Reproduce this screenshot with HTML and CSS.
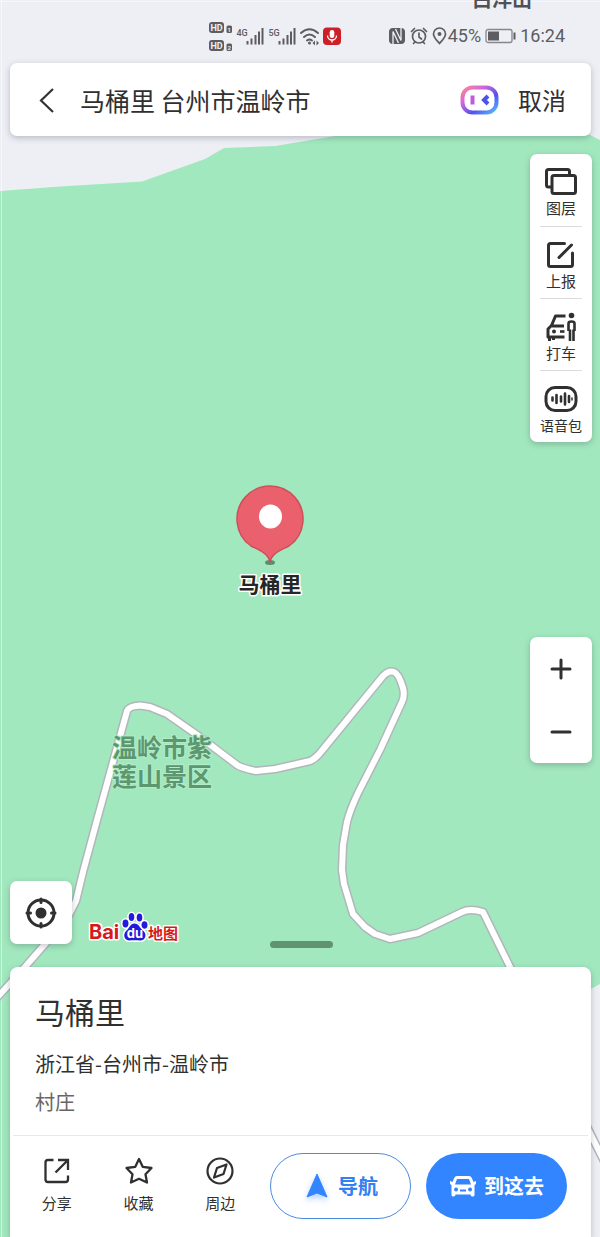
FILE: index.html
```html
<!DOCTYPE html>
<html lang="zh-CN">
<head>
<meta charset="utf-8">
<meta name="viewport" content="width=device-width, initial-scale=1">
<title>马桶里</title>
<link rel="stylesheet" href="styles.css">
</head>
<body>
<main class="screen">
  <svg class="map" viewBox="0 0 600 1237" preserveAspectRatio="xMidYMin slice" role="img" aria-label="地图">
    <rect class="map-land" width="600" height="1237"/>
    <path class="map-park" d="M0 191L60 186.500 142 181.500 205 159 224 148 275 146 335 136 400 128H560L590 135 600 140V984L560 1006 300 1237H0Z"/>
    <path class="map-tile" d="M0 1.500H600M1.500 0V1237"/>
    <g class="road">
      <path id="road" class="road-edge" d="M-6 1001L25 967 45 944 69 915 76 901 83 872 97 820 127 711Q129 706 140 705.500L150 707 167 714 200 737 237 765 Q241 768 256 771L275 769 310 761Q315 759 320 753L383 676Q389 670 394 672T403 688Q405 696 402 702L380 750 358 793Q350 810 347 822L343 845 342 870 344 884 353 914 365 927 375 934 390 939 418 933 462 912Q470 908 483 912L510 967 591 1135 606 1165"/>
      <use href="#road" class="road-fill"/>
    </g>
    <text class="map-town" x="502" y="7">白洋山</text>
    <text class="map-area"><tspan x="162" y="757">温岭市紫</tspan><tspan x="162" y="786">莲山景区</tspan></text>
    <ellipse class="pin-shadow" cx="270" cy="562.500" rx="5" ry="2.500"/>
    <path class="pin" d="M270 562C268 553 259 550 251 546A33 33 0 1 1 289 546C281 550 272 553 270 562Z"/>
    <ellipse cx="270.500" cy="516.500" rx="11.500" ry="12" fill="#fff"/>
    <text class="pin-label" x="270" y="592">马桶里</text>
  </svg>

  <header class="status">
    <svg class="status-signal" viewBox="0 0 136 34" aria-hidden="true">
      <g fill="#5c5d60">
        <rect x="1" y="3" width="15" height="11" rx="3"/><rect x="1" y="21" width="15" height="11" rx="3"/>
        <rect x="18.500" y="6.500" width="5.500" height="7.500" rx="1.500"/><rect x="18.500" y="24.500" width="5.500" height="7.500" rx="1.500"/>
        <g class="hd"><text x="8.500" y="12">HD</text><text x="8.500" y="30">HD</text></g>
        <g class="sim"><text x="21.300" y="12.700">1</text><text x="21.300" y="30.700">2</text></g>
        <g class="gen"><text x="34" y="17">4G</text><text x="66" y="17">5G</text></g>
        <path id="bars" d="M38.500 22h2v3.500h-2zM42.500 19.500h2v6h-2zM46.500 16h2v9.500h-2zM50 12.500h2v13h-2zM53.500 9h2v16.500h-2z"/>
        <use href="#bars" x="32"/>
      </g>
      <g fill="none" stroke="#5c5d60" stroke-width="2" stroke-linecap="round">
        <path d="M93 14Q101.500 6.500 110 14M96 18Q101.500 13 107 18M99 21.500Q101.500 19.500 104 21.500"/>
      </g>
      <circle cx="101.500" cy="24" r="1.500" fill="#5c5d60"/>
      <path d="M107 21.500v5l-2.500-2.500zM108.500 21.500v5l2.500-2.500z" fill="#5c5d60"/>
      <rect x="115" y="8.500" width="18" height="17.500" rx="4" fill="#cb2027"/>
      <rect x="121.700" y="11" width="4.600" height="8" rx="2.300" fill="#fff"/>
      <path d="M119.500 16.500a4.500 4.500 0 0 0 9 0M124 21v2.500" fill="none" stroke="#fff" stroke-width="1.300"/>
    </svg>
    <div class="status-right">
      <svg class="status-icons" viewBox="0 0 60 20" aria-hidden="true">
        <rect x="1" y="2" width="16" height="16" rx="4" fill="#5c5d60"/>
        <path d="M5 18V5.500L10.500 17M13 2V14.500L7.500 3" fill="none" stroke="#eeeff5" stroke-width="1.300"/>
        <g fill="none" stroke="#5c5d60" stroke-width="1.700" stroke-linecap="round">
          <circle cx="31" cy="10.500" r="6.500"/><path d="M31 7v4l2.500 2M23.500 5.500l3-3M38.500 5.500l-3-3M27 16l-1.500 1.500M35 16l1.500 1.500"/>
          <path d="M51.500 17.500C49 14.500 45.500 11.500 45.500 8a6 6 0 0 1 12 0C57.500 11.500 54 14.500 51.500 17.500Z"/>
        </g>
        <circle cx="51.500" cy="8" r="2" fill="#5c5d60"/>
      </svg>
      <span>45%</span>
      <svg class="status-battery" viewBox="0 0 32 16" aria-hidden="true">
        <rect x="1" y="1.500" width="26" height="13" rx="2" fill="none" stroke="#85868a" stroke-width="1.300"/>
        <rect x="3" y="3.500" width="11" height="9" fill="#5c5d60"/><path d="M29.500 4.500v7" stroke="#5c5d60" stroke-width="2"/>
      </svg>
      <time>16:24</time>
    </div>
  </header>

  <form class="search card">
    <button class="icon-button back" type="button" aria-label="返回">
      <svg viewBox="0 0 24 28"><path d="M17 3L5 14.500 17 26" fill="none" stroke="#333" stroke-width="2.200"/></svg>
    </button>
    <input class="search-input" type="text" aria-label="搜索地点" value="马桶里 台州市温岭市">
    <button class="icon-button assistant" type="button" aria-label="语音助手">
      <svg viewBox="0 0 40 32">
        <defs><linearGradient id="glow" x1="0" y1="0" x2="1" y2="1"><stop offset="0" stop-color="#ff8791"/><stop offset=".3" stop-color="#cf68dc"/><stop offset=".65" stop-color="#5552ec"/><stop offset="1" stop-color="#55bdff"/></linearGradient></defs>
        <rect x="2.500" y="3.500" width="34" height="25" rx="10" fill="none" stroke="url(#glow)" stroke-width="4"/>
        <path d="M12.500 11.500v9" stroke="#bd5ed8" stroke-width="4"/><path d="M28 12L24 16 28 20" fill="none" stroke="#4b54e8" stroke-width="4"/>
      </svg>
    </button>
    <button class="cancel" type="button">取消</button>
  </form>

  <section class="controls">
    <nav class="tools card" aria-label="地图工具">
      <button class="tool" type="button">
        <svg viewBox="0 0 34 30"><g fill="#fff" stroke="#303030" stroke-width="3"><rect x="2.500" y="2.500" width="23" height="17.500" rx="2"/><rect x="8" y="8.500" width="23.500" height="18" rx="2"/></g></svg>
        <span>图层</span>
      </button>
      <button class="tool" type="button">
        <svg viewBox="0 0 34 30"><path d="M20.500 3.500H6.500Q4.500 3.500 4.500 5.500V24.500Q4.500 26.500 6.500 26.500H26.500Q28.500 26.500 28.500 24.500V13M15 17.500L27.500 5" fill="none" stroke="#303030" stroke-width="3" stroke-linecap="round"/></svg>
        <span>上报</span>
      </button>
      <button class="tool" type="button">
        <svg viewBox="0 0 34 30"><g fill="none" stroke="#303030" stroke-width="3" stroke-linejoin="round"><path d="M21.500 4H11.500L7.500 13.500 4 17V25H20.500M8 14H20M5.500 25v4M9.500 25v3"/><path d="M24.500 19V11.500Q24.500 9.500 27.500 9.500T30.500 11.500V19M26 17.500V29M29.500 17.500V29" stroke-width="2.600"/></g><circle cx="27.500" cy="3.500" r="2.800" fill="#303030"/><circle cx="10" cy="19.500" r="2" fill="#303030"/><path d="M16 19.500H20.500" stroke="#303030" stroke-width="2.600"/></svg>
        <span>打车</span>
      </button>
      <button class="tool" type="button">
        <svg viewBox="0 0 34 30"><rect x="2" y="3.500" width="30" height="23" rx="9" fill="none" stroke="#303030" stroke-width="3"/><path d="M8.500 13.500v3M12.500 11v8M17 12.500v5M21 9.500v11M25 12v6" stroke="#303030" stroke-width="2.600" stroke-linecap="round"/><path d="M28 14v2" stroke="#303030" stroke-width="1.500" stroke-linecap="round"/></svg>
        <span class="tool-long">语音包</span>
      </button>
    </nav>

    <div class="zoom card">
      <button class="zoom-button" type="button" aria-label="放大"><svg viewBox="0 0 22 22"><path d="M2 11H20M11 2V20" stroke="#303030" stroke-width="3" stroke-linecap="round"/></svg></button>
      <button class="zoom-button" type="button" aria-label="缩小"><svg viewBox="0 0 22 22"><path d="M2 11H20" stroke="#303030" stroke-width="3" stroke-linecap="round"/></svg></button>
    </div>

    <div class="map-foot">
      <div class="map-foot-left">
        <button class="locate card" type="button" aria-label="定位">
          <svg viewBox="0 0 32 32"><circle cx="16" cy="16" r="13" fill="none" stroke="#303030" stroke-width="3"/><circle cx="16" cy="16" r="5.500" fill="#303030"/><path d="M16 2V5.500M16 26.500V30M2 16H5.500M26.500 16H30" stroke="#303030" stroke-width="3" stroke-linecap="round"/></svg>
        </button>
        <svg class="logo" viewBox="0 0 92 34" role="img" aria-label="百度地图">
          <g class="logo-halo">
            <text class="logo-latin" x="1" y="29">Bai</text>
            <text class="logo-cjk" x="60" y="28.500">地图</text>
            <g class="paw">
              <ellipse cx="37.500" cy="13.500" rx="3" ry="4"/><ellipse cx="43.500" cy="7" rx="2.800" ry="4"/><ellipse cx="51.500" cy="7.500" rx="2.800" ry="4"/><ellipse cx="56.500" cy="15" rx="3" ry="3.800"/>
              <path d="M46.500 13.500C51 13.500 51.500 18 55 20.500C59.500 24 57.500 30.500 52.500 30.500C49 30.500 45 30 42 30.500C36.500 31 34.500 25 38 21C41.500 18.500 42 13.500 46.500 13.500Z"/>
            </g>
          </g>
          <text class="logo-du" x="47" y="28">du</text>
        </svg>
      </div>
      <div class="handle"></div>
    </div>
  </section>

  <article class="sheet card">
    <div class="place">
      <h1>马桶里</h1>
      <p class="address">浙江省-台州市-温岭市</p>
      <p class="kind">村庄</p>
    </div>
    <div class="actions">
      <button class="action" type="button">
        <svg viewBox="0 0 30 30"><path d="M11.500 4H6Q3.500 4 3.500 6.500V23.500Q3.500 26 6 26H23.500Q26 26 26 23.500V19.500M16 4H26V14M26 4L13.500 16.500" fill="none" stroke="#303030" stroke-width="2.300"/></svg>
        <span>分享</span>
      </button>
      <button class="action" type="button">
        <svg viewBox="0 0 30 30"><path d="M15 3L18.700 10.800 27.500 12 21.500 18.200 23 26.500 15 22.800 7 26.500 8.500 18.200 2.500 12 11.300 10.800Z" fill="none" stroke="#303030" stroke-width="2.300" stroke-linejoin="round"/></svg>
        <span>收藏</span>
      </button>
      <button class="action" type="button">
        <svg viewBox="0 0 30 30"><g fill="none" stroke="#303030" stroke-width="2.200" stroke-linejoin="round"><circle cx="15" cy="15" r="12.500"/><path d="M21.500 8.500L18.500 18 9 21.500 12 12Z"/></g></svg>
        <span>周边</span>
      </button>
      <button class="pill pill-outline" type="button">
        <svg viewBox="0 0 28 28"><path d="M14 2L24 25 14 21 4 25Z" fill="#3385ff" stroke="#3385ff" stroke-linejoin="round"/></svg>
        <span>导航</span>
      </button>
      <button class="pill pill-solid" type="button">
        <svg viewBox="0 0 28 28"><path fill="#fff" fill-rule="evenodd" d="M8 4H20Q22 4 22.800 6L24.500 10 27 9V12L25.500 13V23Q25.500 24.500 23.500 24.500T21.500 22.500H6.500Q6.500 24.500 4.500 24.500T2.500 23V13L1 12V9L3.500 10 5.200 6Q6 4 8 4ZM8 7L6 12.500H22L20 7ZM7 15.500a2 2 0 1 0 .1 0ZM21 15.500a2 2 0 1 0 .1 0ZM11 17.500v2h6v-2Z"/></svg>
        <span>到这去</span>
      </button>
    </div>
  </article>
</main>
</body>
</html>
```
FILE: styles.css
```css
* { box-sizing: border-box; }

body {
  margin: 0;
  font-family: "Noto Sans CJK SC", "Noto Sans", sans-serif;
  color: #303030;
  background: #eeeff5;
}

button {
  margin: 0;
  padding: 0;
  border: 0;
  background: none;
  color: inherit;
  font: inherit;
}

svg { display: block; flex: none; }

.screen {
  position: relative;
  display: flex;
  flex-direction: column;
  min-height: 100vh;
  overflow: hidden;
  isolation: isolate;
}

.card {
  background: #fff;
  border-radius: 7px;
  box-shadow: 0 2px 6px rgba(40, 50, 70, 0.28);
}

/* Map canvas */
.map {
  position: absolute;
  inset: 0;
  z-index: -1;
  width: 100%;
  height: 100%;
}
.map text { text-anchor: middle; paint-order: stroke; stroke-linejoin: round; font-weight: 700; }
.map-land { fill: #eeeff5; }
.map-park { fill: #a2e8be; }
.map-tile { fill: none; stroke: rgba(255, 255, 255, 0.5); }
.road { fill: none; stroke: #b1b6bb; stroke-width: 9; stroke-linejoin: round; }
.road-fill { stroke: #fff; stroke-width: 6; }
.map-town { font-size: 20px; fill: #505156; }
.map-area { font-size: 25px; fill: #5c976f; stroke: #b2edca; stroke-width: 2; }
.pin { fill: #ea616d; stroke: #cf4e59; stroke-width: 1.5; }
.pin-shadow { fill: #5f8b70; }
.pin-label { font-size: 21px; fill: #262626; stroke: #fff; stroke-width: 3; }

/* Status bar */
.status {
  display: flex;
  justify-content: space-between;
  align-items: center;
  height: 63px;
  padding: 8px 35px 0 208px;
  color: #5c5d60;
  font: 18px/20px Roboto, sans-serif;
}
.status-signal { width: 136px; height: 34px; }
.status-signal text { text-anchor: middle; font-family: Roboto, sans-serif; font-weight: 700; }
.hd text { font-size: 9px; fill: #eeeff5; }
.sim text { font-size: 6px; fill: #eeeff5; }
.gen text { font-size: 9px; font-weight: 500; }
.status-right { display: flex; align-items: center; }
.status-icons { width: 60px; height: 20px; }
.status-battery { width: 32px; height: 16px; margin: 0 3px 0 4px; }

/* Search bar */
.search {
  display: flex;
  align-items: center;
  height: 73px;
  margin: 0 9px 0 10px;
  padding: 0 25px 0 26px;
}
.back svg { width: 24px; height: 28px; }
.search-input {
  flex: 1;
  min-width: 0;
  margin-left: 20px;
  padding: 0;
  border: 0;
  outline: 0;
  background: none;
  color: #303030;
  font: 25px/36px "Noto Sans CJK SC", sans-serif;
}
.assistant { margin-right: 18px; }
.assistant svg { width: 40px; height: 32px; }
.cancel { font-size: 24px; line-height: 36px; }

/* Floating controls */
.controls {
  flex: 1;
  display: flex;
  flex-direction: column;
  align-items: flex-end;
  padding: 18px 8px 23px 10px;
}
.tools {
  display: flex;
  flex-direction: column;
  width: 62px;
  padding: 0 10px;
}
.tool {
  display: flex;
  flex-direction: column;
  align-items: center;
  height: 72px;
  padding-top: 13px;
  font-size: 15px;
  line-height: 22px;
  white-space: nowrap;
}
.tool + .tool { border-top: 1px solid #dcdcdc; }
.tool svg { width: 34px; height: 30px; }
.tool-long { font-size: 14px; }

.zoom {
  display: flex;
  flex-direction: column;
  width: 62px;
  margin-top: 195px;
}
.zoom-button { display: grid; place-items: center; height: 63px; }
.zoom-button svg { width: 22px; height: 22px; }

.map-foot {
  display: grid;
  grid-template-columns: 1fr auto 1fr;
  align-items: end;
  align-self: stretch;
  margin-top: auto;
}
.map-foot-left { display: flex; align-items: flex-end; gap: 16px; }
.locate { display: grid; place-items: center; width: 62px; height: 63px; }
.locate svg { width: 32px; height: 32px; }
.logo { width: 92px; height: 34px; }
.logo-halo { paint-order: stroke; stroke: #fff; stroke-width: 3; stroke-linejoin: round; fill: #d7191c; }
.logo-latin { font: 700 20px Inter, sans-serif; }
.logo-cjk { font-size: 15px; font-weight: 700; }
.logo .paw { fill: #2319dc; }
.logo-du { font: 700 13px Inter, sans-serif; fill: #fff; text-anchor: middle; }
.handle {
  width: 63px;
  height: 7px;
  margin-bottom: -4px;
  border-radius: 4px;
  background: #629370;
}

/* Place sheet */
.sheet { margin: 0 9px 0 10px; border-radius: 8px 8px 0 0; }
.place {
  margin: 0 3px;
  padding: 22px 22px 18px;
  border-bottom: 1px solid #e8e8e8;
}
.place h1 { margin: 0; font-size: 30px; font-weight: 400; line-height: 44px; }
.place p { margin: 0; font-size: 20px; line-height: 30px; }
.place .address { margin-top: 16px; }
.place .kind { margin-top: 8px; color: #666; }
.actions {
  display: flex;
  align-items: center;
  height: 101px;
  padding: 0 24px 2px 6px;
}
.action {
  flex: 1;
  display: flex;
  flex-direction: column;
  align-items: center;
  gap: 5px;
  font-size: 15px;
  line-height: 24px;
}
.action svg { width: 30px; height: 30px; }
.pill {
  display: flex;
  align-items: center;
  justify-content: center;
  gap: 7px;
  width: 141px;
  height: 66px;
  border-radius: 33px;
  font-size: 20px;
  font-weight: 700;
}
.pill svg { width: 28px; height: 28px; }
.pill-outline { margin: 0 15px 0 9px; border: 1px solid #4a8be0; color: #3380f0; }
.pill-outline svg { filter: drop-shadow(0 3px 3px rgba(51, 133, 255, 0.4)); }
.pill-solid { background: #3385ff; color: #fff; }
```
